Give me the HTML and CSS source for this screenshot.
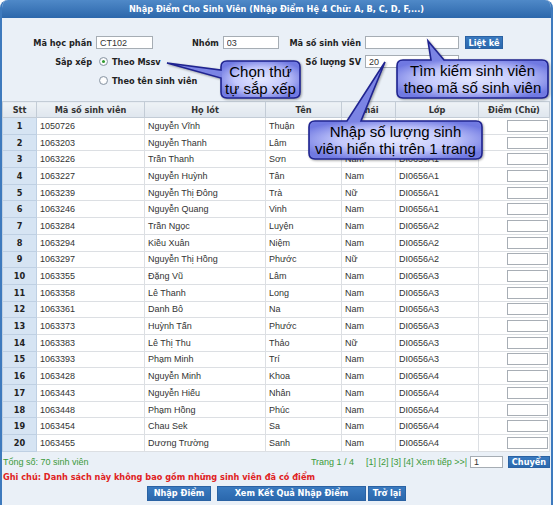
FILE: index.html
```html
<!DOCTYPE html>
<html lang="vi">
<head>
<meta charset="utf-8">
<title>Nhập Điểm Cho Sinh Viên</title>
<link rel="stylesheet" href="styles.css">
</head>
<body>
<div class="frame">
  <div class="titlebar">Nhập Điểm Cho Sinh Viên (Nhập Điểm Hệ 4 Chữ: A, B, C, D, F,...)</div>

  <div class="form">
    <label class="lbl">Mã học phần</label>
    <div class="cell-b">
      <input class="inp inp-hp" type="text" value="CT102">
      <label class="lbl lbl-nhom">Nhóm</label>
      <input class="inp inp-nhom" type="text" value="03">
    </div>
    <label class="lbl">Mã số sinh viên</label>
    <input class="inp inp-wide" type="text" value="">
    <div class="cell-e"><button class="btn btn-liet">Liệt kê</button></div>

    <label class="lbl">Sắp xếp</label>
    <div class="cell-b"><span class="radio checked"></span><span class="opt">Theo Mssv</span></div>
    <label class="lbl">Số lượng SV</label>
    <input class="inp inp-wide" type="text" value="20">
    <div></div>

    <div></div>
    <div class="cell-b"><span class="radio"></span><span class="opt">Theo tên sinh viên</span></div>
  </div>

  <table class="grid">
    <colgroup>
      <col class="w-stt"><col class="w-mssv"><col class="w-ho"><col class="w-ten"><col class="w-phai"><col class="w-lop"><col class="w-diem">
    </colgroup>
    <thead>
      <tr><th>Stt</th><th>Mã số sinh viên</th><th>Họ lót</th><th>Tên</th><th>Phái</th><th>Lớp</th><th>Điểm (Chữ)</th></tr>
    </thead>
    <tbody>
      <tr><td class="stt">1</td><td>1050726</td><td>Nguyễn Vĩnh</td><td>Thuận</td><td></td><td></td><td class="sc"><input class="score" type="text"></td></tr>
      <tr><td class="stt">2</td><td>1063203</td><td>Nguyễn Thanh</td><td>Lâm</td><td></td><td></td><td class="sc"><input class="score" type="text"></td></tr>
      <tr><td class="stt">3</td><td>1063226</td><td>Trần Thanh</td><td>Sơn</td><td>Nam</td><td>DI0656A1</td><td class="sc"><input class="score" type="text"></td></tr>
      <tr><td class="stt">4</td><td>1063227</td><td>Nguyễn Huỳnh</td><td>Tân</td><td>Nam</td><td>DI0656A1</td><td class="sc"><input class="score" type="text"></td></tr>
      <tr><td class="stt">5</td><td>1063239</td><td>Nguyễn Thị Đông</td><td>Trà</td><td>Nữ</td><td>DI0656A1</td><td class="sc"><input class="score" type="text"></td></tr>
      <tr><td class="stt">6</td><td>1063246</td><td>Nguyễn Quang</td><td>Vinh</td><td>Nam</td><td>DI0656A1</td><td class="sc"><input class="score" type="text"></td></tr>
      <tr><td class="stt">7</td><td>1063284</td><td>Trần Ngọc</td><td>Luyện</td><td>Nam</td><td>DI0656A2</td><td class="sc"><input class="score" type="text"></td></tr>
      <tr><td class="stt">8</td><td>1063294</td><td>Kiều Xuân</td><td>Niệm</td><td>Nam</td><td>DI0656A2</td><td class="sc"><input class="score" type="text"></td></tr>
      <tr><td class="stt">9</td><td>1063297</td><td>Nguyễn Thị Hồng</td><td>Phước</td><td>Nữ</td><td>DI0656A2</td><td class="sc"><input class="score" type="text"></td></tr>
      <tr><td class="stt">10</td><td>1063355</td><td>Đặng Vũ</td><td>Lâm</td><td>Nam</td><td>DI0656A3</td><td class="sc"><input class="score" type="text"></td></tr>
      <tr><td class="stt">11</td><td>1063358</td><td>Lê Thanh</td><td>Long</td><td>Nam</td><td>DI0656A3</td><td class="sc"><input class="score" type="text"></td></tr>
      <tr><td class="stt">12</td><td>1063361</td><td>Danh Bô</td><td>Na</td><td>Nam</td><td>DI0656A3</td><td class="sc"><input class="score" type="text"></td></tr>
      <tr><td class="stt">13</td><td>1063373</td><td>Huỳnh Tấn</td><td>Phước</td><td>Nam</td><td>DI0656A3</td><td class="sc"><input class="score" type="text"></td></tr>
      <tr><td class="stt">14</td><td>1063383</td><td>Lê Thị Thu</td><td>Thảo</td><td>Nữ</td><td>DI0656A3</td><td class="sc"><input class="score" type="text"></td></tr>
      <tr><td class="stt">15</td><td>1063393</td><td>Phạm Minh</td><td>Trí</td><td>Nam</td><td>DI0656A3</td><td class="sc"><input class="score" type="text"></td></tr>
      <tr><td class="stt">16</td><td>1063428</td><td>Nguyễn Minh</td><td>Khoa</td><td>Nam</td><td>DI0656A4</td><td class="sc"><input class="score" type="text"></td></tr>
      <tr><td class="stt">17</td><td>1063443</td><td>Nguyễn Hiếu</td><td>Nhân</td><td>Nam</td><td>DI0656A4</td><td class="sc"><input class="score" type="text"></td></tr>
      <tr><td class="stt">18</td><td>1063448</td><td>Phạm Hồng</td><td>Phúc</td><td>Nam</td><td>DI0656A4</td><td class="sc"><input class="score" type="text"></td></tr>
      <tr><td class="stt">19</td><td>1063454</td><td>Chau Sek</td><td>Sa</td><td>Nam</td><td>DI0656A4</td><td class="sc"><input class="score" type="text"></td></tr>
      <tr><td class="stt">20</td><td>1063455</td><td>Dương Trường</td><td>Sanh</td><td>Nam</td><td>DI0656A4</td><td class="sc"><input class="score" type="text"></td></tr>
    </tbody>
  </table>

  <div class="foot">
    <span class="total">Tổng số: 70 sinh viên</span>
    <div class="pager">
      <span class="pg-label">Trang 1 / 4</span>
      <span class="pg-links">[1] [2] [3] [4] Xem tiếp &gt;&gt;|</span>
      <input class="inp inp-page" type="text" value="1">
      <button class="btn btn-go">Chuyển</button>
    </div>
  </div>
  <div class="note">Ghi chú: Danh sách này không bao gồm những sinh viên đã có điểm</div>
  <div class="actions">
    <button class="btn act-nhap">Nhập Điểm</button>
    <button class="btn act-xem">Xem Kết Quả Nhập Điểm</button>
    <button class="btn act-back">Trở lại</button>
  </div>
</div>

<svg class="bubbles" width="553" height="505" viewBox="0 0 553 505" aria-hidden="true">
  <defs>
    <radialGradient id="glow" cx="50%" cy="50%" r="60%">
      <stop offset="0%" stop-color="#e4e7ff"/>
      <stop offset="55%" stop-color="#c3c8fb"/>
      <stop offset="100%" stop-color="#7079e2"/>
    </radialGradient>
  </defs>
  <g class="shapes">
    <path d="M227 61 H294 Q300 61 300 67 V92 Q300 98 294 98 H227 Q221 98 221 92 V78 L167 63 L221 70 V67 Q221 61 227 61 Z"/>
    <path d="M403 60 H431 L428 41 L444 60 H542 Q548 60 548 66 V92 Q548 98 542 98 H403 Q397 98 397 92 V66 Q397 60 403 60 Z"/>
    <path d="M315 121 H347 L385 62 L361 121 H476 Q482 121 482 127 V153 Q482 159 476 159 H315 Q309 159 309 153 V127 Q309 121 315 121 Z"/>
  </g>
  <g class="glows">
    <rect x="222" y="62" width="77" height="35" rx="5"/>
    <rect x="398" y="61" width="149" height="36" rx="5"/>
    <rect x="310" y="122" width="171" height="36" rx="5"/>
  </g>
</svg>
<div class="callout c1">Chọn thứ<br>tự sắp xếp</div>
<div class="callout c2">Tìm kiếm sinh viên<br>theo mã số sinh viên</div>
<div class="callout c3">Nhập số lượng sinh<br>viên hiển thị trên 1 trang</div>
</body>
</html>
```

FILE: styles.css
```css
* { box-sizing: border-box; }
html, body { margin: 0; padding: 0; background: #ffffff; overflow: hidden; }
body {
  position: relative;
  width: 553px;
  height: 505px;
  font-family: "Liberation Sans", Arial, sans-serif;
  font-size: 9px;
  color: #222;
}

.frame {
  width: 553px;
  height: 505px;
  background: #eaf0f7;
  border-left: 2px solid #3e7abd;
  border-right: 2px solid #3e7abd;
  border-radius: 8px 8px 0 0;
  overflow: hidden;
}

.titlebar {
  height: 18px;
  background: linear-gradient(#4f89c8, #2c67ab);
  color: #fff;
  font: bold 8.2px "DejaVu Sans", sans-serif;
  display: flex;
  align-items: center;
  justify-content: center;
}

/* ---------- form ---------- */
.form {
  display: grid;
  grid-template-columns: 90px 182px 79px 94px 42px;
  grid-template-rows: 13px 13px 13px;
  column-gap: 4px;
  row-gap: 6px;
  padding-top: 18px;
  align-items: center;
}
.lbl {
  font: bold 8.2px "DejaVu Sans", sans-serif;
  color: #222;
  text-align: right;
  white-space: nowrap;
}
.cell-b { display: flex; align-items: center; height: 13px; }
.lbl-nhom { margin-left: 39px; margin-right: 4px; }
.inp {
  height: 13px;
  border: 1px solid #a6adb4;
  background: #fff;
  padding: 0 3px;
  font: 9px "Liberation Sans", Arial, sans-serif;
  color: #333;
  outline: none;
}
.inp-hp { width: 57px; }
.inp-nhom { width: 56px; }
.inp-wide { width: 94px; }
.cell-e { display: flex; align-items: center; }

.btn {
  border: 1px solid #2a62a3;
  background: linear-gradient(#3a7ac0, #2b68ad);
  color: #fff;
  font: bold 8.2px "DejaVu Sans", sans-serif;
  padding: 0;
  height: 13px;
  display: inline-flex;
  align-items: center;
  justify-content: center;
  white-space: nowrap;
}
.btn-liet { width: 38px; margin-left: 2px; }

.radio {
  width: 9px;
  height: 9px;
  border-radius: 50%;
  border: 1px solid #8b97a4;
  background: radial-gradient(circle, #ffffff 40%, #dfe4ea);
  margin-left: 3px;
  margin-right: 4px;
  position: relative;
  flex: none;
}
.radio.checked::after {
  content: "";
  position: absolute;
  left: 2px; top: 2px;
  width: 3px; height: 3px;
  border-radius: 50%;
  background: #2f9a2f;
}
.opt { font: bold 8.2px "DejaVu Sans", sans-serif; color: #222; white-space: nowrap; }

/* ---------- table ---------- */
.grid {
  margin-top: 14px;
  width: 547px;
  border-collapse: collapse;
  table-layout: fixed;
  background: #fff;
}
.w-stt { width: 34px; }
.w-mssv { width: 108px; }
.w-ho { width: 121px; }
.w-ten { width: 76px; }
.w-phai { width: 54px; }
.w-lop { width: 83px; }
.w-diem { width: 71px; }

.grid th {
  height: 16px;
  padding: 0;
  background: linear-gradient(#eef2f6, #dfe6ee);
  border: 1px solid #c3ccd6;
  font: bold 8.2px "DejaVu Sans", sans-serif;
  color: #333;
  text-align: center;
}
.grid tbody tr { height: 16.7px; }
.grid td {
  padding: 0 3px;
  border: 1px solid #dcdfe3;
  white-space: nowrap;
  overflow: hidden;
  color: #333;
}
.grid td.stt {
  background: #d6e4f3;
  border-color: #bfd0e3;
  text-align: center;
  font: bold 8.2px "DejaVu Sans", sans-serif;
  color: #222;
}
.grid td.sc { text-align: right; padding: 0 1px 0 0; }
.score {
  width: 41px;
  height: 12px;
  border: 1px solid #a8aeb5;
  background: #fff;
  vertical-align: middle;
  display: inline-block;
}

/* ---------- footer ---------- */
.foot {
  display: flex;
  align-items: center;
  height: 13px;
  margin-top: 4px;
  padding-right: 1px;
  color: #3a9a3a;
}
.total { margin-left: 1px; }
.pager { margin-left: auto; display: flex; align-items: center; }
.pg-links { margin-left: 12px; }
.inp-page { width: 33px; height: 12px; margin-left: 3px; }
.btn-go { width: 42px; height: 12px; margin-left: 5px; }

.note {
  margin-top: 3px;
  height: 12px;
  line-height: 12px;
  padding-left: 1px;
  font: bold 8.2px "DejaVu Sans", sans-serif;
  color: #e02222;
}
.actions {
  margin-top: 2px;
  display: flex;
  justify-content: center;
}
.actions .btn { height: 15px; }
.act-nhap { width: 64px; }
.act-xem { width: 149px; margin-left: 6px; }
.act-back { width: 38px; margin-left: 2px; }

/* ---------- callouts ---------- */
.bubbles { position: absolute; left: 0; top: 0; pointer-events: none; }
.shapes path {
  fill: #7b84e4;
  stroke: #1f2390;
  stroke-width: 1.6;
  filter: drop-shadow(1px 1px 1px rgba(0, 0, 0, 0.35));
}
.glows rect { fill: url(#glow); }

.callout {
  position: absolute;
  display: flex;
  align-items: center;
  justify-content: center;
  text-align: center;
  font: 15px/17px "Liberation Sans", Arial, sans-serif;
  color: #000;
  white-space: nowrap;
}
.c1 { left: 221px; top: 61px; width: 79px; height: 37px; }
.c2 { left: 397px; top: 60px; width: 151px; height: 38px; }
.c3 { left: 309px; top: 121px; width: 173px; height: 38px; }
```
